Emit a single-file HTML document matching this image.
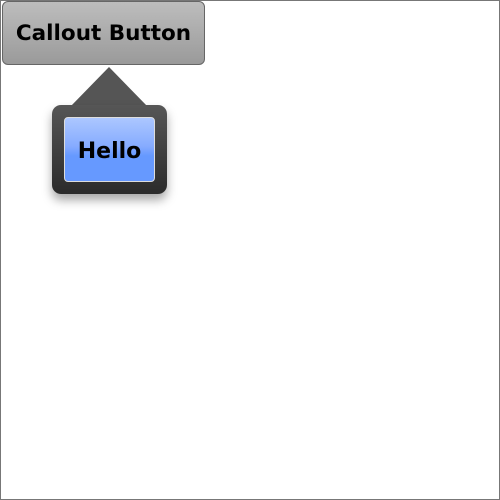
<!DOCTYPE html>
<html><head><style>
html,body{margin:0;padding:0;}
body{width:500px;height:500px;position:relative;overflow:hidden;background:#fff;}
.frame{position:absolute;left:0;top:0;width:498px;height:498px;border:1px solid #777;}
.btn{position:absolute;left:2px;top:1px;width:201px;height:62px;border:1px solid #666;border-radius:6px;background:linear-gradient(#bdbdbd,#9a9a9a);font:bold 21.5px "DejaVu Sans","Liberation Sans",sans-serif;color:#000;text-align:center;line-height:64px;}
.box{position:absolute;left:52px;top:105px;width:115px;height:89px;border-radius:9px;background:linear-gradient(#565656,#2b2b2b);box-shadow:0 6px 10px rgba(0,0,0,0.35);}
.arrow{position:absolute;left:70px;top:67px;width:0;height:0;border-left:39px solid transparent;border-right:39px solid transparent;border-bottom:40px solid #555;}
.hello{position:absolute;left:64px;top:117px;width:89px;height:63px;border:1px solid #ddd;border-radius:4px;background:linear-gradient(#acc7ff 0%,#86abff 45%,#6699ff 60%,#6699ff 100%);font:bold 22px "DejaVu Sans","Liberation Sans",sans-serif;text-align:center;line-height:67px;color:#000;}
</style></head><body>
<div class="frame"></div>
<div class="btn">Callout Button</div>
<div class="arrow"></div>
<div class="box"></div>
<div class="hello">Hello</div>
</body></html>
